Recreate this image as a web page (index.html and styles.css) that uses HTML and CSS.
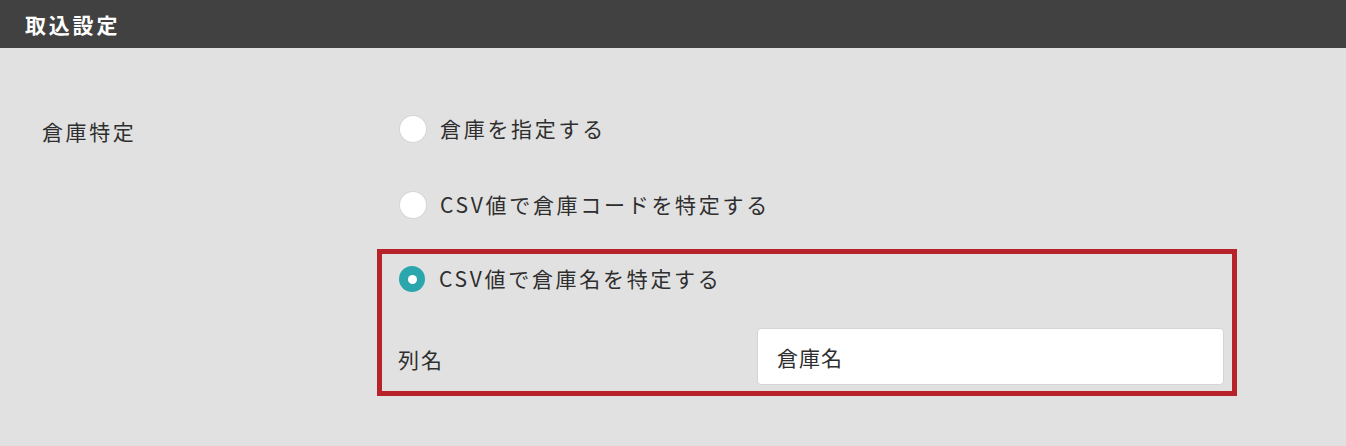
FILE: index.html
```html
<!DOCTYPE html>
<html lang="ja">
<head>
<meta charset="utf-8">
<link rel="stylesheet" href="styles.css">
</head>
<body>
<div class="header">取込設定</div>
<div class="section">
  <div class="label">倉庫特定</div>
  <div class="options">
    <div class="option"><span class="radio"></span><span class="opt-text">倉庫を指定する</span></div>
    <div class="option second"><span class="radio"></span><span class="opt-text">CSV値で倉庫コードを特定する</span></div>
    <div class="box">
      <div class="option inbox"><span class="radio checked"></span><span class="opt-text">CSV値で倉庫名を特定する</span></div>
      <div class="field">
        <div class="field-label">列名</div>
        <div class="input">倉庫名</div>
      </div>
    </div>
  </div>
</div>
</body>
</html>
```
FILE: styles.css
```css
html, body {
  margin: 0;
  padding: 0;
}
body {
  background: #e1e1e1;
  font-family: "Noto Sans CJK JP", "Noto Sans", sans-serif;
  color: #2e2e2e;
  width: 1346px;
  height: 446px;
  overflow: hidden;
}
.header {
  height: 48px;
  background: #414141;
  color: #ffffff;
  font-weight: 700;
  font-size: 21px;
  letter-spacing: 2.8px;
  line-height: 48px;
  padding-left: 25px;
}
.section {
  display: flex;
  padding-top: 56px;
}
.label {
  width: 335px;
  padding-left: 42px;
  font-size: 21px;
  letter-spacing: 2.6px;
  line-height: 50px;
  padding-top: 2px;
}
.options {
  width: 860px;
  display: flex;
  flex-direction: column;
}
.option {
  height: 50px;
  display: flex;
  align-items: center;
  gap: 14px;
  padding-left: 23px;
  font-size: 21px;
  letter-spacing: 2.7px;
}
.option.second {
  margin-top: 26px;
}
.radio {
  width: 26px;
  height: 26px;
  border-radius: 50%;
  background: #ffffff;
  box-shadow: 0 0 0 1px #d6d6d6;
  box-sizing: border-box;
  flex: none;
  display: flex;
  align-items: center;
  justify-content: center;
}
.radio.checked {
  background: #2aa6ac;
  box-shadow: none;
}
.radio.checked::after {
  content: "";
  width: 9px;
  height: 9px;
  border-radius: 50%;
  background: #ffffff;
}
.opt-text {
  line-height: 1;
  margin-top: -2px;
}
.box {
  margin-top: 19px;
  border: 5px solid #b8222a;
  padding: 0 8px 6px 16px;
}
.option.inbox {
  padding-left: 1px;
}
.field {
  margin-top: 24px;
  display: flex;
  align-items: center;
}
.field-label {
  flex: 1;
  font-size: 21px;
  letter-spacing: 2px;
  padding-top: 4px;
}
.input {
  width: 467px;
  height: 57px;
  box-sizing: border-box;
  background: #ffffff;
  border: 1px solid #d4d4d4;
  border-radius: 4px;
  padding-left: 19px;
  font-size: 21px;
  letter-spacing: 1px;
  display: flex;
  align-items: center;
}
```
